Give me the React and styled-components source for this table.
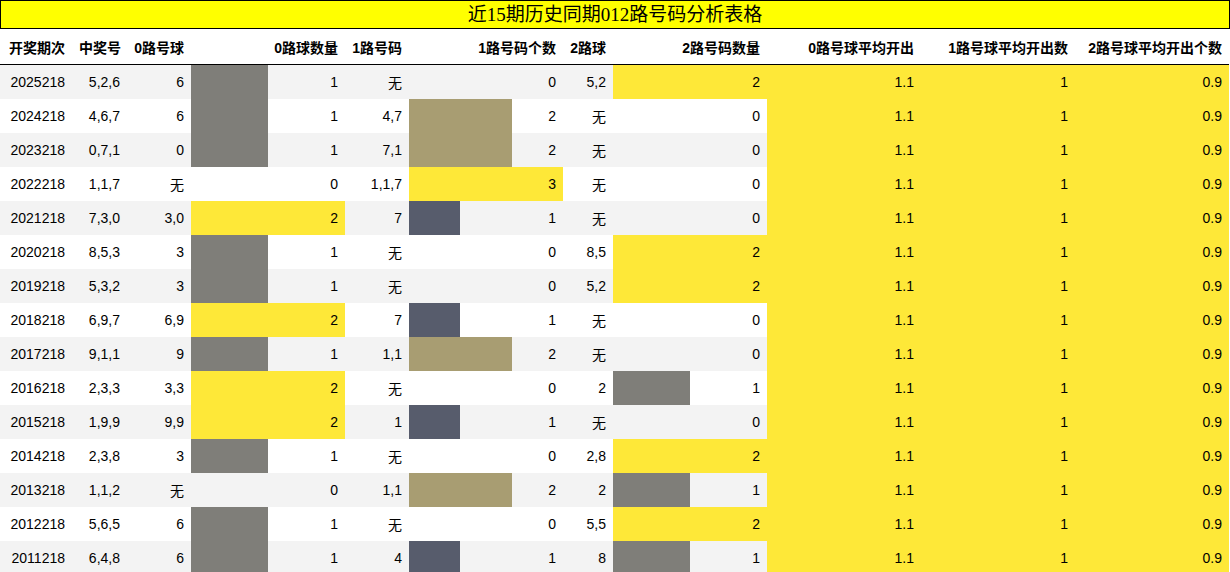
import React from "react";
import styled, { createGlobalStyle } from "styled-components";

const GlobalStyle = createGlobalStyle`
  body {
    margin: 0;
    background: #fff;
    font-family: "Liberation Sans", "Noto Sans CJK SC", sans-serif;
    color: #000;
  }
`;

// 0路号球 / 1路号码 / 2路球 和对应个数
const rows = [
  ["2025218", "5,2,6", "6", 1, "无", 0, "5,2", 2],
  ["2024218", "4,6,7", "6", 1, "4,7", 2, "无", 0],
  ["2023218", "0,7,1", "0", 1, "7,1", 2, "无", 0],
  ["2022218", "1,1,7", "无", 0, "1,1,7", 3, "无", 0],
  ["2021218", "7,3,0", "3,0", 2, "7", 1, "无", 0],
  ["2020218", "8,5,3", "3", 1, "无", 0, "8,5", 2],
  ["2019218", "5,3,2", "3", 1, "无", 0, "5,2", 2],
  ["2018218", "6,9,7", "6,9", 2, "7", 1, "无", 0],
  ["2017218", "9,1,1", "9", 1, "1,1", 2, "无", 0],
  ["2016218", "2,3,3", "3,3", 2, "无", 0, "2", 1],
  ["2015218", "1,9,9", "9,9", 2, "1", 1, "无", 0],
  ["2014218", "2,3,8", "3", 1, "无", 0, "2,8", 2],
  ["2013218", "1,1,2", "无", 0, "1,1", 2, "2", 1],
  ["2012218", "5,6,5", "6", 1, "无", 0, "5,5", 2],
  ["2011218", "6,4,8", "6", 1, "4", 1, "8", 1],
];

const headers = [
  "开奖期次",
  "中奖号",
  "0路号球",
  "0路球数量",
  "1路号码",
  "1路号码个数",
  "2路球",
  "2路号码数量",
  "0路号球平均开出",
  "1路号球平均开出数",
  "2路号球平均开出个数",
];

const widths = [72, 55, 64, 154, 64, 154, 50, 154, 154, 154, 154];

// cividis 色阶
function cividis(t) {
  if (t >= 0.99) return "#fee838";
  if (t >= 0.6) return "#a89d72";
  if (t >= 0.45) return "#7f7e79";
  return "#575c6c";
}

const maxOf = (i) => Math.max(...rows.map((r) => r[i]));
const max0 = maxOf(3);
const max1 = maxOf(5);
const max2 = maxOf(7);

export default function App() {
  return (
    <>
      <GlobalStyle />
      <Title>近15期历史同期012路号码分析表格</Title>
      <Table>
        <colgroup>
          {widths.map((w, i) => (
            <col key={i} style={{ width: w }} />
          ))}
        </colgroup>
        <thead>
          <tr>
            {headers.map((h) => (
              <Th key={h}>{h}</Th>
            ))}
          </tr>
        </thead>
        <tbody>
          {rows.map((r, i) => (
            <Row key={r[0]} $odd={i % 2 === 0}>
              <Td>{r[0]}</Td>
              <Td>{r[1]}</Td>
              <Td>{r[2]}</Td>
              <BarTd $pct={(r[3] / max0) * 100} $color={cividis(r[3] / max0)}>
                {r[3]}
              </BarTd>
              <Td>{r[4]}</Td>
              <BarTd $pct={(r[5] / max1) * 100} $color={cividis(r[5] / max1)}>
                {r[5]}
              </BarTd>
              <Td>{r[6]}</Td>
              <BarTd $pct={(r[7] / max2) * 100} $color={cividis(r[7] / max2)}>
                {r[7]}
              </BarTd>
              <AvgTd>1.1</AvgTd>
              <AvgTd>1</AvgTd>
              <AvgTd>0.9</AvgTd>
            </Row>
          ))}
        </tbody>
      </Table>
    </>
  );
}

const Title = styled.div`
  box-sizing: border-box;
  width: 1230px;
  height: 29px;
  border: 1px solid #000;
  background: #ffff00;
  font-family: "Liberation Serif", "Noto Sans CJK SC", serif;
  font-size: 19px;
  line-height: 27px;
  text-align: center;
  color: #000;
`;

const Table = styled.table`
  width: 1229px;
  table-layout: fixed;
  border-collapse: collapse;
  border-spacing: 0;
  font-size: 14px;
`;

const Th = styled.th`
  height: 35px;
  padding: 0 7px;
  text-align: right;
  font-weight: bold;
  white-space: nowrap;
  border-bottom: 1px solid #000;
  color: #000;
`;

const Row = styled.tr`
  background: ${(p) => (p.$odd ? "#f3f3f3" : "#fff")};
`;

const Td = styled.td`
  height: 34px;
  padding: 0 7px;
  text-align: right;
  white-space: nowrap;
`;

const BarTd = styled(Td)`
  background: ${(p) =>
    p.$pct > 0
      ? `linear-gradient(90deg, ${p.$color} ${p.$pct}%, transparent ${p.$pct}%)`
      : "transparent"};
`;

const AvgTd = styled(Td)`
  background: #fee838;
`;
